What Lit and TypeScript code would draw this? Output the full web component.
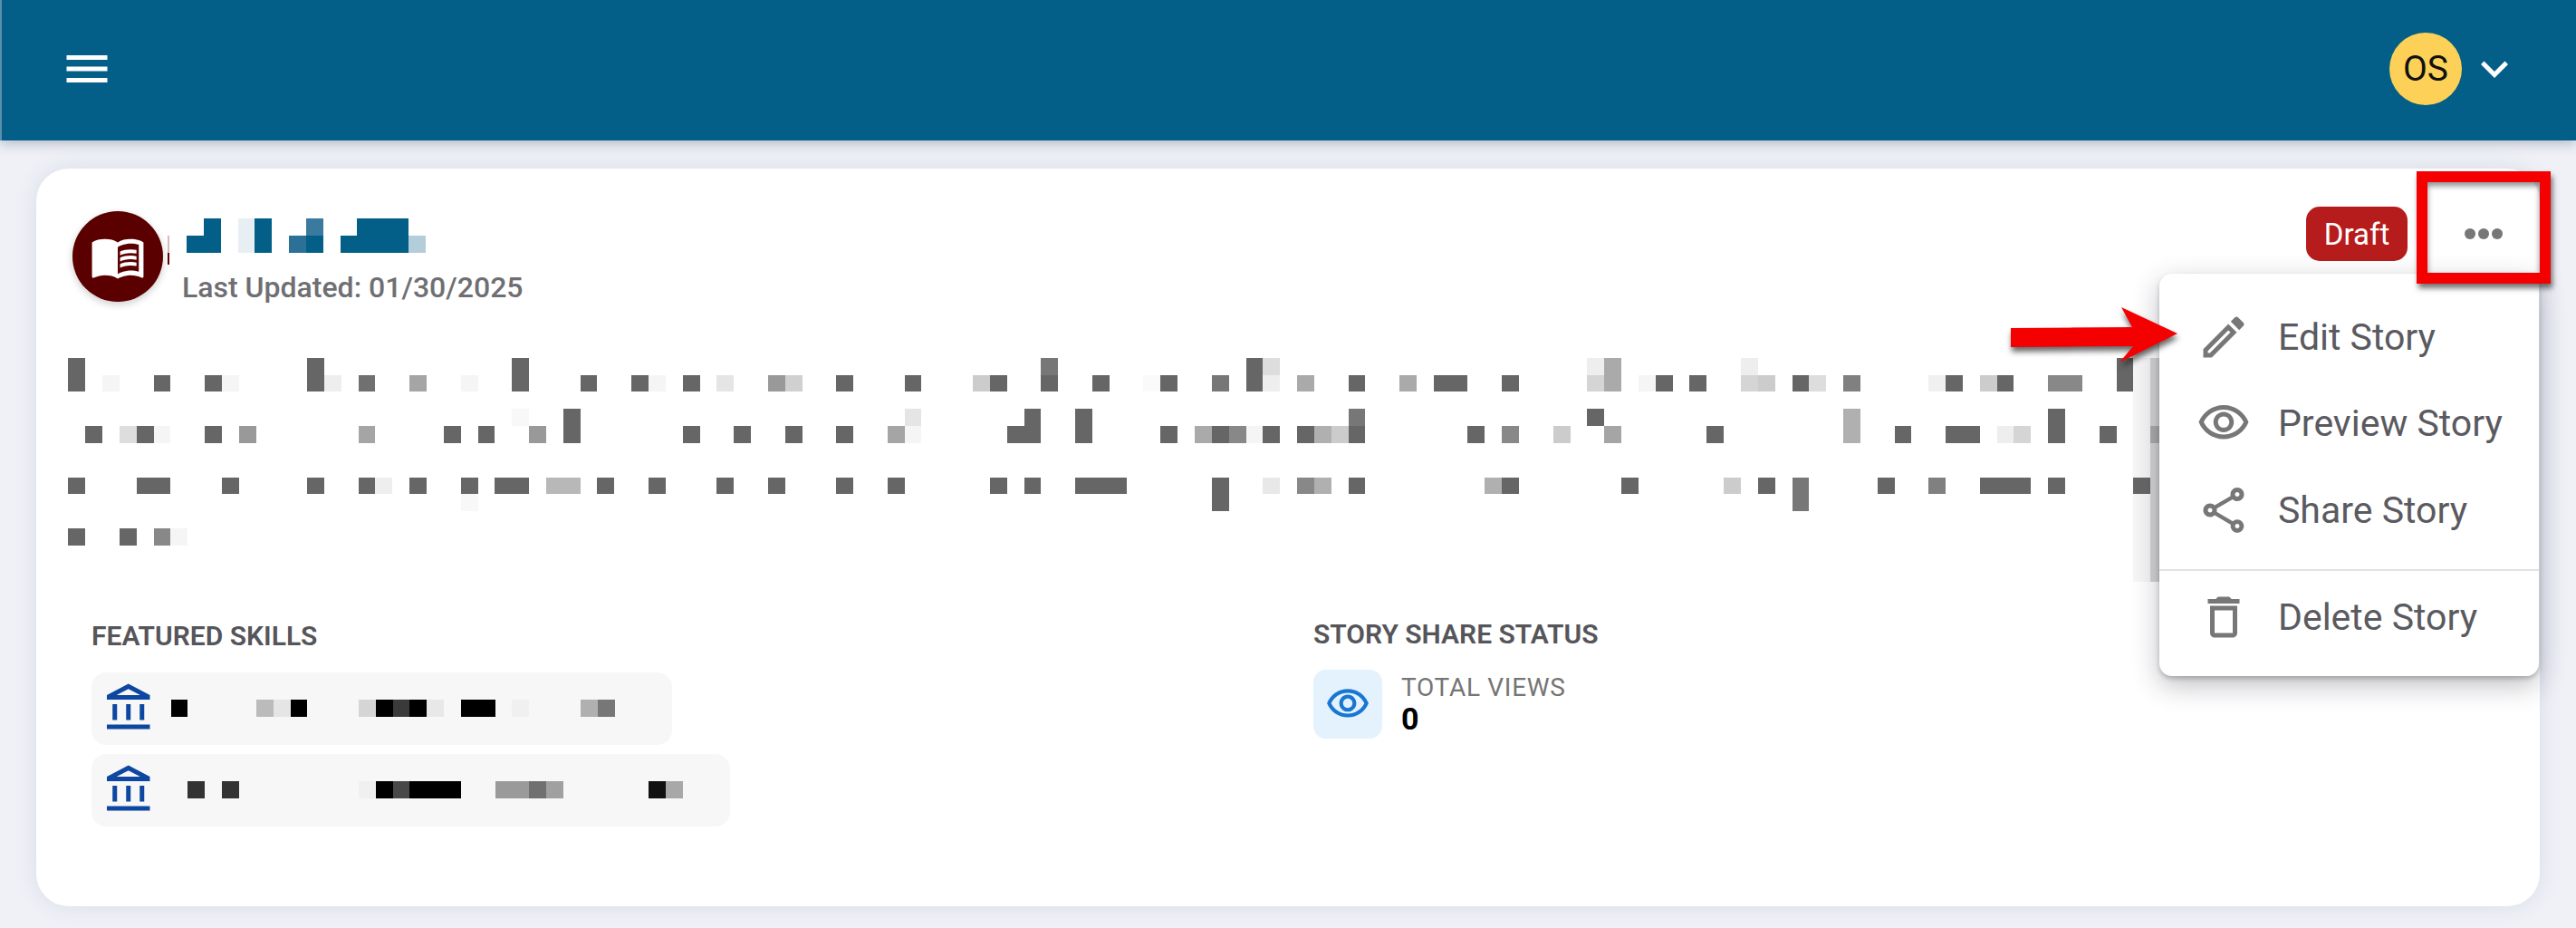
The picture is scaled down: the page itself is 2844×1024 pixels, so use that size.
import { LitElement, css, html } from "lit";
import { customElement } from "lit/decorators.js";

// material icon paths, 24 box
const ICONS: Record<string, string> = {
  menu: "M3 18h18v-2H3v2zm0-5h18v-2H3v2zm0-7v2h18V6H3z",
  chevron: "M16.59 8.59 12 13.17 7.41 8.59 6 10l6 6 6-6z",
  book: "M21 5c-1.11-.35-2.33-.5-3.5-.5-1.95 0-4.05.4-5.5 1.5-1.45-1.1-3.55-1.5-5.5-1.5S2.45 4.9 1 6v14.65c0 .25.25.5.5.5.1 0 .15-.05.25-.05C3.1 20.45 5.05 20 6.5 20c1.95 0 4.05.4 5.5 1.5 1.35-.85 3.8-1.5 5.5-1.5 1.65 0 3.35.3 4.75 1.05.1.05.15.05.25.05.25 0 .5-.25.5-.5V6c-.6-.45-1.25-.75-2-1zm0 13.5c-1.1-.35-2.3-.5-3.5-.5-1.7 0-4.15.65-5.5 1.5V8c1.35-.85 3.8-1.5 5.5-1.5 1.2 0 2.4.15 3.5.5v11.5zM17.5 10.5c.88 0 1.73.09 2.5.26V9.24c-.79-.15-1.64-.24-2.5-.24-1.7 0-3.24.29-4.5.83v1.66c1.13-.64 2.7-.99 4.5-.99zM13 12.49v1.66c1.13-.64 2.7-.99 4.5-.99.88 0 1.73.09 2.5.26V11.9c-.79-.15-1.64-.24-2.5-.24-1.7 0-3.24.3-4.5.83zM17.5 14.33c-1.7 0-3.24.29-4.5.83v1.66c1.13-.64 2.7-.99 4.5-.99.88 0 1.73.09 2.5.26v-1.52c-.79-.16-1.64-.24-2.5-.24z",
  edit: "M14.06 9.02l.92.92L5.92 19H5v-.92l9.06-9.06M17.66 3c-.25 0-.51.1-.7.29l-1.83 1.83 3.75 3.75 1.83-1.83c.39-.39.39-1.02 0-1.41l-2.34-2.34c-.2-.2-.45-.29-.71-.29zm-3.6 3.19L3 17.25V21h3.75L17.81 9.94l-3.75-3.75z",
  eye: "M12 6c3.79 0 7.17 2.13 8.82 5.5C19.17 14.87 15.79 17 12 17s-7.17-2.13-8.82-5.5C4.83 8.13 8.21 6 12 6m0-2C7 4 2.73 7.11 1 11.5 2.73 15.89 7 19 12 19s9.27-3.11 11-7.5C21.27 7.11 17 4 12 4zm0 5c1.38 0 2.5 1.12 2.5 2.5S13.38 14 12 14s-2.5-1.12-2.5-2.5S10.62 9 12 9m0-2c-2.48 0-4.5 2.02-4.5 4.5S9.52 16 12 16s4.5-2.02 4.5-4.5S14.48 7 12 7z",
  share: "M18 16.08c-.76 0-1.44.3-1.96.77L8.91 12.7c.05-.23.09-.46.09-.7s-.04-.47-.09-.7l7.05-4.11c.54.5 1.25.81 2.04.81 1.66 0 3-1.34 3-3s-1.34-3-3-3-3 1.34-3 3c0 .24.04.47.09.7L8.04 9.81C7.5 9.31 6.79 9 6 9c-1.66 0-3 1.34-3 3s1.34 3 3 3c.79 0 1.5-.31 2.04-.81l7.12 4.16c-.05.21-.08.43-.08.65 0 1.61 1.31 2.92 2.92 2.92s2.92-1.31 2.92-2.92c0-1.61-1.31-2.92-2.92-2.92zM18 4c.55 0 1 .45 1 1s-.45 1-1 1-1-.45-1-1 .45-1 1-1zM6 13c-.55 0-1-.45-1-1s.45-1 1-1 1 .45 1 1-.45 1-1 1zm12 7.02c-.55 0-1-.45-1-1s.45-1 1-1 1 .45 1 1-.45 1-1 1z",
  trash: "M6 19c0 1.1.9 2 2 2h8c1.1 0 2-.9 2-2V7H6v12zM8 9h8v10H8V9zm7.5-5l-1-1h-5l-1 1H5v2h14V4h-3.5z",
  bank: "M6.5 10h-2v7h2v-7zm6 0h-2v7h2v-7zm8.5 9H2v2h19v-2zm-2.5-9h-2v7h2v-7zm-7-6.74L16.71 6H6.29l5.21-2.74m0-2.26L2 6v2h19V6l-9.5-5z",
};

const icon = (name: string, size: number, color: string) => html`
  <svg class="icon" width=${size} height=${size} viewBox="0 0 24 24" fill=${color}>
    <path d=${ICONS[name]}></path>
  </svg>
`;

// The blurred-out text is a mosaic: one string per row, "col:shade", where a
// two digit shade is a gray and anything longer is a full colour.
const shade = (s: string) => (s.length === 2 ? `#${s}${s}${s}` : `#${s}`);

const mosaic = (rows: string[]) => html`
  <div class="mosaic">
    ${rows.map((row, r) =>
      row
        .split(" ")
        .filter(Boolean)
        .map((token) => {
          const [col, c] = token.split(":");
          return html`<i
            style="grid-row:${r + 1};grid-column:${Number(col) + 1};background:${shade(c)}"
          ></i>`;
        })
    )}
  </div>
`;

const TITLE = [
  "1:035f87 3:e8eff4 4:035f87 7:3a7a9f 10:035f87 11:035f87 12:035f87",
  "0:035f87 1:035f87 3:e8eff4 4:035f87 6:2b7096 7:035f87 9:035f87 10:035f87 11:035f87 12:035f87 13:b4cddb",
];

const DESCRIPTION = [
  "0:66 14:66 26:66 57:77 69:66 70:dd 89:ee 90:aa 98:ee 120:66",
  "0:66 2:f5 5:66 8:66 9:f5 14:66 15:ee 17:70 20:a5 23:f5 26:66 30:66 33:66 34:f5 36:66 38:e5 41:99 42:d0 45:66 49:66 53:cc 54:66 57:66 60:66 63:fa 64:66 67:77 69:66 70:ee 72:aa 75:66 78:aa 80:66 81:66 84:66 89:d5 90:aa 92:f5 93:66 95:66 98:d5 99:cc 101:66 102:dd 104:80 109:f0 110:66 112:cc 113:66 116:88 117:88 120:66",
  "",
  "26:f8 29:66 49:e5 56:66 59:66 75:77 89:66 104:b0 116:66",
  "1:66 3:dd 4:66 5:f5 8:66 10:99 17:a5 22:66 24:66 27:99 29:66 36:66 39:66 42:66 45:66 48:a5 49:f5 55:66 56:66 59:66 64:66 66:aa 67:66 68:88 69:f5 70:66 72:66 73:b0 74:cc 75:66 82:66 84:88 87:cc 90:a5 96:66 104:b0 107:66 110:66 111:66 113:ee 114:d5 116:66 119:66 122:aa",
  "",
  "",
  "0:66 4:66 5:66 9:66 14:66 17:66 18:ee 20:66 23:66 25:66 26:66 28:b8 29:b8 31:66 34:66 38:66 41:66 45:66 48:66 54:66 56:66 59:66 60:66 61:66 67:66 70:e8 72:88 73:b0 75:66 83:b0 84:66 91:66 97:cc 99:66 101:77 106:66 109:80 112:66 113:66 114:66 116:66 121:66",
  "23:f8 67:66 101:77",
  "",
  "0:66 3:66 5:88 6:f5",
];

const SKILLS = [
  {
    width: 641,
    rows: ["0:00 5:bb 6:e5 7:00 11:d5 12:00 13:3a 14:00 15:e8 17:00 18:00 20:f0 24:b0 25:77"],
  },
  {
    width: 705,
    rows: ["1:33 3:33 11:f0 12:00 13:48 14:00 15:00 16:00 19:9a 20:9a 21:70 22:a0 28:11 29:a8"],
  },
];

const MENU = [
  { icon: "edit", label: "Edit Story" },
  { icon: "eye", label: "Preview Story" },
  { icon: "share", label: "Share Story" },
];

@customElement("app-root")
export class AppRoot extends LitElement {
  static styles = css`
    :host {
      display: block;
      position: relative;
      min-height: 1024px;
      background: #eff1f7;
      font-family: Roboto, "Liberation Sans", sans-serif;
      overflow: hidden;
    }

    .icon {
      display: block;
      flex: none;
    }

    .mosaic {
      display: grid;
      grid-auto-columns: 18.85px;
      grid-auto-rows: 18.85px;
    }

    .topbar {
      display: flex;
      align-items: center;
      height: 155px;
      box-sizing: border-box;
      padding: 0 60px 4px 64px;
      background: #035f87;
      border-left: 2px solid #5a90ab;
      box-shadow: 0 4px 12px rgba(60, 70, 100, 0.3);
      position: relative;
    }

    .user {
      margin-left: auto;
      display: flex;
      align-items: center;
      gap: 6px;
    }

    .avatar-os {
      width: 80px;
      height: 80px;
      border-radius: 50%;
      background: #fdd158;
      color: #111;
      font-size: 39px;
      display: flex;
      align-items: center;
      justify-content: center;
    }

    .chevron {
      margin-top: 1px;
    }

    .main {
      padding: 31px 40px 24px;
    }

    .card {
      position: relative;
      height: 814px;
      background: #fff;
      border-radius: 36px;
      box-shadow: 0 0 24px rgba(70, 80, 120, 0.12);
    }

    .head {
      display: flex;
      align-items: flex-start;
      padding: 47px 0 0 40px;
    }

    .story-avatar {
      width: 100px;
      height: 100px;
      border-radius: 50%;
      background: #5a0000;
      display: flex;
      align-items: center;
      justify-content: center;
      box-shadow: 0 3px 8px rgba(0, 0, 0, 0.2);
    }

    .caret {
      width: 2px;
      height: 32px;
      margin: 27px 14px 0 5px;
      background: linear-gradient(#d8b9b9 58%, #600000 58%);
    }

    .head-text {
      padding-top: 8px;
    }

    .title {
      margin-left: 5px;
    }

    .updated {
      margin-top: 19px;
      font-size: 32px;
      line-height: 38px;
      font-weight: 500;
      color: #6f6f73;
    }

    .actions {
      margin: -5px 0 0 auto;
      display: flex;
      align-items: center;
      gap: 22px;
    }

    .badge {
      height: 60px;
      width: 112px;
      display: flex;
      align-items: center;
      justify-content: center;
      border-radius: 15px;
      background: #b71c1c;
      color: #fff;
      font-size: 33px;
    }

    .more {
      position: relative;
      width: 124px;
      height: 60px;
      display: flex;
      align-items: center;
      justify-content: center;
      gap: 3px;
    }

    .more b {
      width: 12px;
      height: 12px;
      border-radius: 50%;
      background: #777;
    }

    .red-box {
      position: absolute;
      z-index: 2;
      top: -39px;
      bottom: -25px;
      left: -12px;
      right: -12px;
      border: 12px solid #f50000;
      box-shadow: 2px 5px 6px rgba(0, 0, 0, 0.55), inset 0 4px 6px rgba(0, 0, 0, 0.45);
    }

    .description {
      position: relative;
      isolation: isolate;
      height: 247px;
      margin: 59px 0 0 35.3px;
    }

    .scrollbar {
      position: absolute;
      z-index: -1;
      top: 0;
      bottom: 0;
      left: 2279.7px;
      width: 29px;
      background: linear-gradient(90deg, #f6f6f6 19px, #d3d3d3 19px);
    }

    .details {
      display: flex;
      padding: 42px 0 0 61px;
    }

    .skills {
      width: 1349px;
    }

    .label {
      font-size: 30px;
      line-height: 36px;
      font-weight: 600;
      color: #55555a;
    }

    .chips {
      display: flex;
      flex-direction: column;
      gap: 10px;
      margin-top: 22px;
    }

    .chip {
      box-sizing: border-box;
      height: 80px;
      display: flex;
      align-items: center;
      gap: 15.6px;
      padding-left: 12px;
      background: #f7f7f7;
      border-radius: 16px;
    }

    .status {
      margin-top: -2px;
    }

    .stat {
      display: flex;
      align-items: center;
      gap: 21px;
      margin-top: 21px;
    }

    .stat-icon {
      width: 76px;
      height: 76px;
      border-radius: 14px;
      background: #e3f2fd;
      display: flex;
      align-items: center;
      justify-content: center;
    }

    .stat-label {
      font-size: 28px;
      line-height: 32px;
      letter-spacing: 0.7px;
      color: #757575;
    }

    .stat-value {
      font-size: 34px;
      line-height: 36px;
      font-weight: 700;
      color: #000;
    }

    .menu {
      position: absolute;
      z-index: 1;
      top: 116px;
      right: 1px;
      width: 419px;
      height: 444px;
      box-sizing: border-box;
      padding-top: 22px;
      background: #fff;
      border-radius: 14px;
      box-shadow: 0 3px 5px rgba(0, 0, 0, 0.2), 0 10px 30px rgba(40, 40, 60, 0.3);
    }

    .item {
      display: flex;
      align-items: center;
      height: 95.5px;
      gap: 30px;
      padding-left: 41px;
      font-size: 41px;
      color: #5a5a60;
    }

    .divider {
      height: 2px;
      margin: 17px 0 4px;
      background: #e2e2e2;
    }

    .arrow {
      position: absolute;
      z-index: 3;
      left: 2210px;
      top: 330px;
      filter: drop-shadow(1px 5px 3px rgba(0, 0, 0, 0.6));
    }
  `;

  render() {
    return html`
      <header class="topbar">
        ${icon("menu", 60, "#fff")}
        <div class="user">
          <div class="avatar-os">OS</div>
          <div class="chevron">${icon("chevron", 60, "#fff")}</div>
        </div>
      </header>

      <main class="main">
        <section class="card">
          <div class="head">
            <div class="story-avatar">${icon("book", 62, "#fff")}</div>
            <div class="caret"></div>
            <div class="head-text">
              <div class="title">${mosaic(TITLE)}</div>
              <div class="updated">Last Updated: 01/30/2025</div>
            </div>
            <div class="actions">
              <div class="badge">Draft</div>
              <div class="more">
                <b></b><b></b><b></b>
                <div class="red-box"></div>
              </div>
            </div>
          </div>

          <div class="description">
            ${mosaic(DESCRIPTION)}
            <div class="scrollbar"></div>
          </div>

          <div class="details">
            <div class="skills">
              <div class="label">FEATURED SKILLS</div>
              <div class="chips">
                ${SKILLS.map(
                  (skill) => html`
                    <div class="chip" style="width:${skill.width}px">
                      ${icon("bank", 60, "#0d47a1")} ${mosaic(skill.rows)}
                    </div>
                  `
                )}
              </div>
            </div>
            <div class="status">
              <div class="label">STORY SHARE STATUS</div>
              <div class="stat">
                <div class="stat-icon">${icon("eye", 50, "#1976d2")}</div>
                <div>
                  <div class="stat-label">TOTAL VIEWS</div>
                  <div class="stat-value">0</div>
                </div>
              </div>
            </div>
          </div>

          <div class="menu">
            ${MENU.map(
              (item) => html`
                <div class="item">${icon(item.icon, 60, "#777")}<span>${item.label}</span></div>
              `
            )}
            <div class="divider"></div>
            <div class="item">${icon("trash", 60, "#777")}<span>Delete Story</span></div>
          </div>
        </section>
      </main>

      <svg class="arrow" width="210" height="80" viewBox="0 0 210 80">
        <polygon
          points="10,32 144,31 132,9 194,38 130,70 145,52 10,53"
          fill="#f50000"
        ></polygon>
      </svg>
    `;
  }
}
